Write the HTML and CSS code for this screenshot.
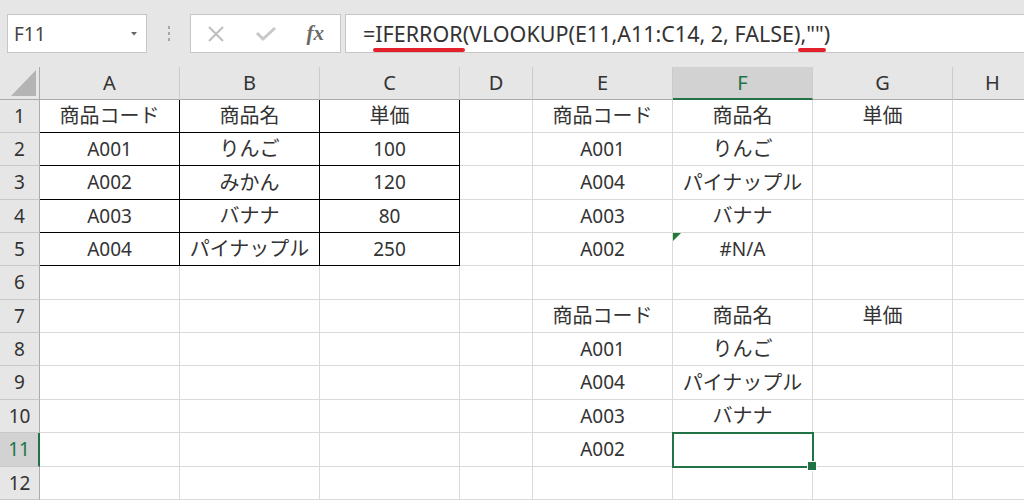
FILE: index.html
```html
<!DOCTYPE html>
<html lang="ja">
<head>
<meta charset="utf-8">
<title>VLOOKUP IFERROR</title>
<link rel="stylesheet" href="styles.css">
</head>
<body>
<div class="toolbar">
  <div class="namebox"><span>F11</span><svg class="caret" width="6" height="4" viewBox="0 0 6 4"><path d="M0 0H6L3 3.5Z" fill="#666"/></svg></div>
  <div class="dots"><i></i><i></i><i></i></div>
  <div class="fbtns">
    <span class="fbtn"><svg width="18" height="16" viewBox="0 0 18 16"><path d="M2 1L16 15M16 1L2 15" stroke="#bfbfbf" stroke-width="2" fill="none"/></svg></span>
    <span class="fbtn"><svg width="22" height="16" viewBox="0 0 22 16"><path d="M2 7L8 13L20 2" stroke="#c8c8c8" stroke-width="3" fill="none"/></svg></span>
    <span class="fbtn fx">fx</span>
  </div>
  <div class="formula"><span class="ftext">=<span class="mark">IFERROR</span>(VLOOKUP(E11,A11:C14, 2, FALSE)<span class="mark">,""</span>)</span></div>
</div>
<div class="sheet">
  <div class="c corner"><i></i></div>
  <div class="c ch">A</div><div class="c ch">B</div><div class="c ch">C</div><div class="c ch">D</div>
  <div class="c ch">E</div><div class="c ch sel">F</div><div class="c ch">G</div><div class="c ch">H</div>

  <div class="c rh">1</div>
  <div class="c tb ja">商品コード</div><div class="c tb ja">商品名</div><div class="c tb ja">単価</div><div class="c"></div>
  <div class="c ja">商品コード</div><div class="c ja">商品名</div><div class="c ja">単価</div><div class="c"></div>

  <div class="c rh">2</div>
  <div class="c tb">A001</div><div class="c tb ja">りんご</div><div class="c tb">100</div><div class="c"></div>
  <div class="c">A001</div><div class="c ja">りんご</div><div class="c"></div><div class="c"></div>

  <div class="c rh">3</div>
  <div class="c tb">A002</div><div class="c tb ja">みかん</div><div class="c tb">120</div><div class="c"></div>
  <div class="c">A004</div><div class="c ja">パイナップル</div><div class="c"></div><div class="c"></div>

  <div class="c rh">4</div>
  <div class="c tb">A003</div><div class="c tb ja">バナナ</div><div class="c tb">80</div><div class="c"></div>
  <div class="c">A003</div><div class="c ja">バナナ</div><div class="c"></div><div class="c"></div>

  <div class="c rh">5</div>
  <div class="c tb">A004</div><div class="c tb ja">パイナップル</div><div class="c tb">250</div><div class="c"></div>
  <div class="c">A002</div><div class="c err">#N/A</div><div class="c"></div><div class="c"></div>

  <div class="c rh">6</div>
  <div class="c"></div><div class="c"></div><div class="c"></div><div class="c"></div>
  <div class="c"></div><div class="c"></div><div class="c"></div><div class="c"></div>

  <div class="c rh">7</div>
  <div class="c"></div><div class="c"></div><div class="c"></div><div class="c"></div>
  <div class="c ja">商品コード</div><div class="c ja">商品名</div><div class="c ja">単価</div><div class="c"></div>

  <div class="c rh">8</div>
  <div class="c"></div><div class="c"></div><div class="c"></div><div class="c"></div>
  <div class="c">A001</div><div class="c ja">りんご</div><div class="c"></div><div class="c"></div>

  <div class="c rh">9</div>
  <div class="c"></div><div class="c"></div><div class="c"></div><div class="c"></div>
  <div class="c">A004</div><div class="c ja">パイナップル</div><div class="c"></div><div class="c"></div>

  <div class="c rh">10</div>
  <div class="c"></div><div class="c"></div><div class="c"></div><div class="c"></div>
  <div class="c">A003</div><div class="c ja">バナナ</div><div class="c"></div><div class="c"></div>

  <div class="c rh sel">11</div>
  <div class="c"></div><div class="c"></div><div class="c"></div><div class="c"></div>
  <div class="c">A002</div><div class="c active"></div><div class="c"></div><div class="c"></div>

  <div class="c rh">12</div>
  <div class="c"></div><div class="c"></div><div class="c"></div><div class="c"></div>
  <div class="c"></div><div class="c"></div><div class="c"></div><div class="c"></div>
</div>
</body>
</html>
```
FILE: styles.css
```css
* { box-sizing: border-box; }
html, body { margin: 0; }
body {
  background: #e6e6e6;
  width: 1024px;
  height: 500px;
  overflow: hidden;
  font-family: "Noto Sans", "Noto Sans CJK JP", sans-serif;
  color: #333;
}

.toolbar {
  display: flex;
  align-items: flex-start;
  height: 67px;
  padding: 14px 0 0 7px;
}
.namebox {
  width: 140px;
  height: 39px;
  background: #fff;
  border: 1px solid #c6c6c6;
  display: flex;
  align-items: center;
  justify-content: space-between;
  padding: 0 9px 0 6px;
  font-size: 19px;
  color: #444;
}
.dots {
  width: 43px;
  height: 39px;
  display: flex;
  flex-direction: column;
  align-items: center;
  justify-content: center;
  gap: 3px;
}
.dots i {
  display: block;
  width: 2px;
  height: 3px;
  background: #a8a8a8;
}
.fbtns {
  width: 151px;
  height: 39px;
  background: #fff;
  border: 1px solid #c6c6c6;
  display: flex;
  align-items: center;
}
.fbtn {
  width: 50px;
  display: flex;
  justify-content: center;
  align-items: center;
}
.fx {
  font-family: "Liberation Serif", serif;
  font-style: italic;
  font-weight: bold;
  font-size: 21px;
  color: #6a6a6a;
}
.formula {
  flex: 1;
  margin-left: 4px;
  margin-right: -4px;
  height: 39px;
  background: #fff;
  border: 1px solid #c6c6c6;
  padding-left: 17px;
  display: flex;
  align-items: center;
  font-size: 21.5px;
  color: #333;
}
.ftext { white-space: pre; }
.mark { position: relative; }
.mark::after {
  content: "";
  position: absolute;
  left: -2px;
  right: -2px;
  bottom: -4px;
  height: 4px;
  border-radius: 2px;
  background: #e3212b;
}

.sheet {
  display: grid;
  grid-template-columns: 40px 140px 140px 140px 73px 140px 140px 140px 80px;
  grid-template-rows: 33px 33px 33px 34px 33px 33px 34px 33px 33px 34px 33px 34px 33px;
  width: 1036px;
  background: #fff;
}
.c {
  border-right: 1px solid #dadada;
  border-bottom: 1px solid #dadada;
  display: flex;
  align-items: center;
  justify-content: center;
  font-size: 19px;
  line-height: 1;
  white-space: nowrap;
}
.ja { font-size: 20px; }
.ch, .rh, .corner { background: #e6e6e6; color: #333; }
.ch {
  font-size: 20px;
  border-right-color: #cbcbcb;
  border-bottom-color: #ababab;
}
.rh {
  border-right-color: #ababab;
  border-bottom-color: #c8c8c8;
}
.corner {
  border-right-color: #ababab;
  border-bottom-color: #ababab;
  justify-content: flex-end;
  align-items: flex-end;
  padding: 0 3px 3px 0;
}
.corner i {
  display: block;
  width: 25px;
  height: 26px;
  background: #b4b4b4;
  clip-path: polygon(100% 0, 100% 100%, 0 100%);
}
.ch.sel {
  background: #d2d2d2;
  color: #217346;
  border-bottom: 2px solid #217346;
}
.rh.sel {
  background: #d2d2d2;
  color: #217346;
  border-right: 2px solid #217346;
}
.tb {
  border-right-color: #000;
  border-bottom-color: #000;
}
.err { position: relative; }
.err::before {
  content: "";
  position: absolute;
  top: 0;
  left: 0;
  border-top: 8px solid #1e7b34;
  border-right: 8px solid transparent;
}
.active { position: relative; }
.active::before {
  content: "";
  position: absolute;
  top: -1px;
  left: -1px;
  right: -2px;
  bottom: -2px;
  border: 2px solid #217346;
  z-index: 2;
}
.active::after {
  content: "";
  position: absolute;
  right: -5px;
  bottom: -5px;
  width: 8px;
  height: 8px;
  background: #217346;
  border: 1px solid #fff;
  z-index: 3;
}
```
